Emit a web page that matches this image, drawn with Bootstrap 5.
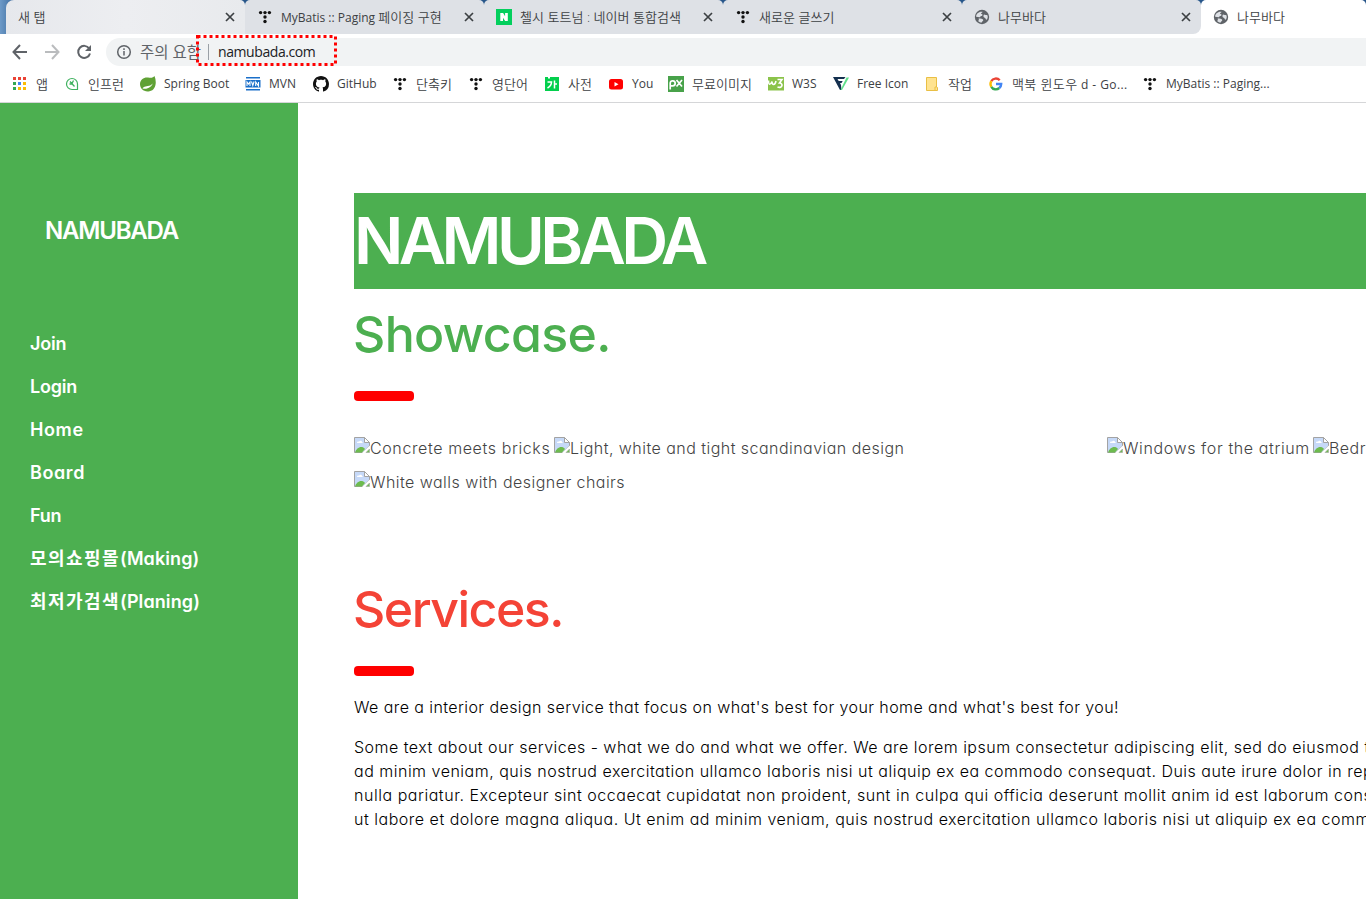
<!DOCTYPE html>
<html lang="ko">
<head>
  <meta charset="UTF-8" />
  <meta name="viewport" content="width=device-width, initial-scale=1.0" />
  <title>나무바다</title>
  <!-- Bootstrap CSS CDN -->
  <link href="https://cdn.jsdelivr.net/npm/bootstrap@5.3.2/dist/css/bootstrap.min.css" rel="stylesheet" />
  <style>
    body {
      height: 899px;
      font-family: "Inter", "Noto Sans CJK KR", sans-serif;
      font-feature-settings: "cv11";
      color: #000;
      background: #fff;
    }
    svg { display: block; flex-shrink: 0; }

    /* browser chrome */
    .browser-top {
      height: 103px;
      font-family: "Open Sans", "Noto Sans CJK KR", sans-serif;
      font-size: 12px;
      line-height: 16px;
      color: #3c4043;
      border-bottom: 1px solid #d5d6d8;
    }
    .tab-strip {
      display: grid;
      grid-template-columns: 245px repeat(4, 239px) 165px;
      height: 34px;
      background: linear-gradient(90deg, #6d9ac8, #27568a 20px);
    }
    .browser-tab {
      position: relative;
      display: flex;
      align-items: center;
      padding: 0 7px 0 12px;
      background: #dee1e6;
      border-radius: 5px 5px 0 0;
    }
    .browser-tab.first-tab {
      margin-left: 6px;
      background: linear-gradient(90deg, #e6e8ec, #edeef1 50%, #e8eaed);
      border-radius: 8px 5px 0 0;
    }
    .browser-tab.last-idle { border-bottom-right-radius: 8px; }
    .browser-tab.active { background: #fff; }
    .under-white { background: linear-gradient(#27568a 8px, #fff 8px); }
    .tab-line::after {
      content: "";
      position: absolute;
      right: -1px;
      top: 8px;
      width: 1px;
      height: 19px;
      background: #80868b;
    }
    .tab-label { margin-left: 8px; flex: 1; white-space: nowrap; }
    .ko { font-weight: 350; font-size: 13px; letter-spacing: .05px; }
    .address-row { height: 36px; padding: 4px 0 4px 12px; }
    .omnibox {
      height: 28px;
      margin-left: 14px;
      padding-left: 10px;
      background: #f1f3f4;
      border-radius: 14px 0 0 14px;
      font-size: 14px;
    }
    .warn-label { width: 60px; font-size: 15.5px; color: #5f6368; white-space: nowrap; }
    .host { margin-left: 9px; color: #202124; letter-spacing: -.42px; }
    .divider { width: 1px; height: 16px; background: #9aa0a6; }
    .highlight-box { position: absolute; left: 196px; top: 35px; }
    .bookmarks {
      display: grid;
      grid-template-columns: 52px 76px 105px 68px 79px 76px 76px 64px 60px 100px 65px 91px 64px 154px auto;
      padding-left: 12px;
      height: 28px;
      align-items: center;
      white-space: nowrap;
    }
    .bookmark { display: flex; align-items: center; gap: 8px; }
    .search-label { letter-spacing: .4px; }

    /* page */
    .side-menu { width: 298px; height: 796px; background: #4caf50; color: #fff; }
    .brand { font-size: 24px; font-weight: 600; line-height: 36px; margin: 109px 0 0 45px; padding-top: 1px; letter-spacing: -1.2px; }
    .side-links { margin-top: 78px; padding-left: 30px; }
    .side-links a {
      display: block;
      height: 43px;
      line-height: 34px;
      font-size: 18px;
      font-weight: 600;
      color: #fff;
      text-decoration: none;
      white-space: nowrap;
      letter-spacing: -.2px;
    }
    .side-links .wide { letter-spacing: .6px; }
    .side-links .hangul { letter-spacing: 1.45px; }
    .side-links .latin { letter-spacing: .1px; }
    .page-main { padding: 90px 0 0 56px; overflow: hidden; white-space: nowrap; }
    .hero-title { height: 96px; line-height: 96px; font-size: 65px; font-weight: 600; letter-spacing: -4.55px; background: #4caf50; color: #fff; margin: 0; }
    .section-title { font-size: 50px; font-weight: 500; line-height: 72px; margin: 9px 0 21px -1px; }
    .green { color: #4caf50; letter-spacing: -.65px; }
    .red { color: #f44336; letter-spacing: -1.5px; }
    .bar { width: 60px; height: 10px; border-radius: 4px; background: #f00; }
    .gallery { margin: 36px 0 68px; }
    .photo-row { display: grid; grid-template-columns: 200px 553px 206px 200px; height: 34px; font-size: 16px; font-weight: 300; color: #444; line-height: 22px; }
    .photo { display: flex; letter-spacing: .61px; }
    .photo.long { letter-spacing: .46px; }
    .copy { font-size: 16px; font-weight: 300; line-height: 24px; margin: 0 0 16px; }
    .intro { margin-top: 19px; letter-spacing: .42px; }
    .line-1 { letter-spacing: .483px; }
    .line-2 { letter-spacing: .5px; }
    .line-3 { letter-spacing: .535px; }
    .line-4 { letter-spacing: .515px; }
  </style>
</head>
<body class="overflow-hidden">

  <!-- icons used more than once -->
  <svg width="0" height="0" class="position-absolute">
    <defs>
      <symbol id="dots" viewBox="0 0 16 16">
        <g fill="#111"><circle cx="3.6" cy="3.6" r="1.7"/><circle cx="8" cy="3.6" r="1.7"/><circle cx="12.4" cy="3.6" r="1.7"/><circle cx="8" cy="8" r="1.7"/><circle cx="8" cy="12.5" r="1.7"/></g>
      </symbol>
      <symbol id="cross" viewBox="0 0 16 16"><path d="M4 4l8 8M12 4l-8 8" stroke="#3c4043" stroke-width="1.7"/></symbol>
      <symbol id="globe" viewBox="0 0 16 16">
        <circle cx="8" cy="8" r="7.2" fill="#5f6368"/>
        <path d="M8.500 2.800c-.2 1.300-1.300 1-1.600 2 1.200.2 2.100.8 1.400 1.800-.8.8-2 .3-2.200 1.600-1.500.2-3-.6-4-.4C2 4.800 5 2.200 8.500 2.800zM10 5.600c1.200.6 2.300.2 3.400.6.7 1.500.3 3.300-.7 4.600-1.200 0-.8-1.500-2-2-1.400-.2-1.700-2.200-.7-3.200zM4.600 9.400c2 .1 4.500 0 4.700 1.500-.1 1.200-1.400 1-1.500 2.600-1.500.1-3-.7-3.700-1.600 1-.6.9-1.600.5-2.500z" fill="#dee1e6"/>
      </symbol>
      <symbol id="broken" viewBox="0 0 16 16">
        <path d="M.5 15.500V.5h10l5 5V9L9 15.500z" fill="#c6d9f8" stroke="#a3a3a3"/>
        <path d="M3 6c0-1.500 1.500-1.700 2-1.200C5.500 3 8 3.500 8 5c1 0 1 1 .5 1z" fill="#fff"/>
        <path d="M1 15.500c1-3.500 4-6 7-5.500 1.300.2 2.200 1 3 2L8 15.500z" fill="#6dbb4e"/>
        <path d="M10.500.5v5h5z" fill="#fff" stroke="#a3a3a3"/>
        <path d="M16 8.500V11l-5 5H8z" fill="#fff"/>
        <path d="M12 15.500h3.500V12z" fill="#6dbb4e" stroke="#a3a3a3" stroke-width=".6"/>
      </symbol>
    </defs>
  </svg>

  <header class="browser-top position-relative">
    <div class="tab-strip">
      <div class="browser-tab first-tab"><span class="tab-label ko ms-0">새 탭</span><svg width="16" height="16"><use href="#cross"/></svg></div>
      <div class="browser-tab tab-line"><svg width="16" height="16"><use href="#dots"/></svg><span class="tab-label">MyBatis :: Paging <span class="ko">페이징 구현</span></span><svg width="16" height="16"><use href="#cross"/></svg></div>
      <div class="browser-tab tab-line"><svg width="16" height="16" viewBox="0 0 16 16"><path d="M0 0h16v16H0z" fill="#03cf5d"/><path d="M4.300 12V4h2.800l2 3.200V4h2.700v8H9.100L7 8.800V12z" fill="#fff"/></svg><span class="tab-label ko">첼시 토트넘 : 네이버 통합검색</span><svg width="16" height="16"><use href="#cross"/></svg></div>
      <div class="browser-tab tab-line"><svg width="16" height="16"><use href="#dots"/></svg><span class="tab-label ko">새로운 글쓰기</span><svg width="16" height="16"><use href="#cross"/></svg></div>
      <div class="under-white"><div class="browser-tab last-idle h-100"><svg width="16" height="16"><use href="#globe"/></svg><span class="tab-label ko">나무바다</span><svg width="16" height="16"><use href="#cross"/></svg></div></div>
      <div class="browser-tab active"><svg width="16" height="16"><use href="#globe"/></svg><span class="tab-label ko">나무바다</span></div>
    </div>

    <div class="address-row d-flex align-items-center">
      <svg width="16" height="16" viewBox="0 0 16 16" fill="none" stroke="#5f6368" stroke-width="2"><path d="M15 8H2M8 1L1.500 8 8 15"/></svg>
      <svg class="ms-3" width="16" height="16" viewBox="0 0 16 16" fill="none" stroke="#babcbe" stroke-width="2"><path d="M1 8h13M8 1l6.500 7L8 15"/></svg>
      <svg class="ms-3" width="16" height="16" viewBox="0 0 16 16"><path d="M13.200 4.500A6 6 0 1 0 14 9.500" fill="none" stroke="#5f6368" stroke-width="2"/><path d="M15 1v6H9z" fill="#5f6368"/></svg>
      <div class="omnibox d-flex align-items-center flex-grow-1">
        <svg width="16" height="16" viewBox="0 0 16 16"><circle cx="8" cy="8" r="6.300" fill="none" stroke="#5f6368" stroke-width="1.500"/><path d="M8 7v4.500M8 4.300v1.600" stroke="#5f6368" stroke-width="1.500"/></svg>
        <span class="warn-label ms-2">주의 요함</span>
        <span class="divider ms-2"></span>
        <span class="host">namubada.com</span>
      </div>
    </div>

    <nav class="bookmarks" aria-label="Bookmarks">
      <span class="bookmark"><svg width="16" height="16" viewBox="0 0 16 16"><path d="M1 1h3v3H1zM6 1h3v3H6zM11 1h3v3h-3z" fill="#ea4335"/><path d="M1 6h3v3H1zM1 11h3v3H1z" fill="#34a853"/><path d="M6 6h3v3H6z" fill="#4285f4"/><path d="M11 6h3v3h-3zM11 11h3v3h-3zM6 11h3v3H6z" fill="#fbbc05"/></svg><span class="ko">앱</span></span>
      <span class="bookmark"><svg width="16" height="16" viewBox="0 0 16 16" fill="none" stroke="#3fb15f"><path d="M13.500 13.500V8A5.500 5.500 0 1 0 8 13.500z" stroke-width="1.200"/><path d="M6 5.500l4.500 5M9.500 4.500l-2 4M5.500 8h3" stroke-width="1.300"/></svg><span class="ko">인프런</span></span>
      <span class="bookmark"><svg width="16" height="16" viewBox="0 0 16 16"><path d="M14.500 0c2.500 6 1.500 14-5 15.300C4 16.500 0 12.500 0 8.300 0 3.500 4 1 8 1.500c3 .4 5 .5 6.500-1.500z" fill="#5fa134"/><path d="M2.500 12.500c5 1 9-1 11-6.500-1 3.500-5 4-8 4.500-1.500.3-2.500 1-3 2z" fill="#fff"/></svg><span>Spring Boot</span></span>
      <span class="bookmark"><svg width="16" height="16" viewBox="0 0 16 16"><path d="M1 1h14v1.500H1zM1 13h14v1.500H1z" fill="#1a6fc9"/><path d="M.5 4h15v7.500H.5z" fill="#1a6fc9"/><path d="M2 10V6l1.500 2L5 6v4M6.500 5.500l1.300 4 1.300-4M10.700 10V6l2.800 4V6" fill="none" stroke="#fff" stroke-width="1.100"/></svg><span>MVN</span></span>
      <span class="bookmark"><svg width="16" height="16" viewBox="0 0 16 16"><path d="M8 0C3.580 0 0 3.580 0 8c0 3.540 2.290 6.530 5.470 7.590.4.070.55-.17.55-.38 0-.19-.01-.82-.01-1.490-2.010.37-2.530-.49-2.690-.94-.09-.23-.48-.94-.82-1.130-.28-.15-.68-.52-.01-.53.63-.01 1.080.58 1.230.82.72 1.210 1.870.87 2.330.66.07-.52.28-.87.51-1.070-1.780-.2-3.640-.89-3.640-3.950 0-.87.31-1.590.82-2.150-.08-.2-.36-1.020.08-2.120 0 0 .67-.21 2.200.82.64-.18 1.320-.27 2-.27s1.360.09 2 .27c1.530-1.040 2.200-.82 2.200-.82.44 1.100.16 1.920.08 2.120.51.56.82 1.270.82 2.150 0 3.070-1.870 3.750-3.650 3.950.29.25.54.73.54 1.480 0 1.070-.01 1.930-.01 2.200 0 .21.15.46.55.38A8.010 8.010 0 0 0 16 8c0-4.420-3.580-8-8-8z" fill="#111"/></svg><span>GitHub</span></span>
      <span class="bookmark"><svg width="16" height="16"><use href="#dots"/></svg><span class="ko">단축키</span></span>
      <span class="bookmark"><svg width="16" height="16"><use href="#dots"/></svg><span class="ko">영단어</span></span>
      <span class="bookmark"><svg width="16" height="16" viewBox="0 0 16 16"><path d="M1 1h3v1.500h2V1h9v14H1z" fill="#03cf4d"/><path d="M3.500 6h4c0 3-1.500 4.500-4 6M10.500 4.500v8M10.500 8h2.500" fill="none" stroke="#fff" stroke-width="1.500"/></svg><span class="ko">사전</span></span>
      <span class="bookmark"><svg width="16" height="16" viewBox="0 0 16 16"><rect x="1" y="3" width="14" height="10.500" rx="2.500" fill="#f00"/><path d="M6.500 6v4.500l4-2.250z" fill="#fff"/></svg><span>You</span></span>
      <span class="bookmark"><svg width="16" height="16" viewBox="0 0 16 16"><path d="M0 0h16v16H0z" fill="#48a24a"/><path d="M2.200 13.500V7a2.500 2.500 0 1 1 2.500 2.800H3M8.500 4l5.500 6.500M14 4l-5.500 6.500" fill="none" stroke="#fff" stroke-width="1.700"/></svg><span class="ko">무료이미지</span></span>
      <span class="bookmark"><svg width="16" height="16" viewBox="0 0 16 16"><path d="M0 1h16v13.500H0z" fill="#8bc34a"/><path d="M.5 4.500c0 5 2 4.500 3.500 1 0 4 3 4 4-.5M9.500 3.500h4.500L11.500 7c4 0 3 6-2 4" fill="none" stroke="#fff" stroke-width="1.600"/></svg><span>W3S</span></span>
      <span class="bookmark"><svg width="16" height="16" viewBox="0 0 16 16"><path d="M0 1h12.500l-1.500 2H4.500l1.200 2h4l-1.200 2H7l1 2 .5 5H7z" fill="#14304f"/><path d="M13.500 1.500H16L9 14H7.500z" fill="#5fe08a"/></svg><span>Free Icon</span></span>
      <span class="bookmark"><svg width="16" height="16" viewBox="0 0 16 16"><path d="M2.500 1.500h10v9.500l1 .5v3h-11z" fill="#ffe38f" stroke="#e9bf45"/><path d="M11 14v-3h1.500" fill="none" stroke="#e9bf45"/></svg><span class="ko">작업</span></span>
      <span class="bookmark"><svg width="16" height="16" viewBox="0 0 16 16" fill="none" stroke-width="2.400"><path d="M3.300 5.200A5.200 5.200 0 0 1 11.700 4.300" stroke="#ea4335"/><path d="M3.300 5.200a5.500 5.500 0 0 0 0 5.600" stroke="#fbbc05"/><path d="M3.300 10.800A5.200 5.200 0 0 0 11.300 12" stroke="#34a853"/><path d="M8 8h5.200c0 1.800-.7 3-1.900 4" stroke="#4285f4"/></svg><span class="search-label"><span class="ko search-label">맥북 윈도우</span> d - Go...</span></span>
      <span class="bookmark"><svg width="16" height="16"><use href="#dots"/></svg><span>MyBatis :: Paging...</span></span>
    </nav>

    <!-- dotted marker round the host name -->
    <svg class="highlight-box" width="141" height="31"><rect x="1.500" y="1.500" width="138" height="28" fill="none" stroke="#f00" stroke-width="3" stroke-dasharray="3 3"/></svg>
  </header>

  <div class="d-flex">
    <aside class="side-menu flex-shrink-0 overflow-hidden">
      <div class="brand">NAMUBADA</div>
      <nav class="side-links">
        <a href="#">Join</a>
        <a href="#">Login</a>
        <a href="#" class="wide">Home</a>
        <a href="#" class="wide">Board</a>
        <a href="#">Fun</a>
        <a href="#"><span class="hangul">모의쇼핑몰</span><span class="latin">(Making)</span></a>
        <a href="#"><span class="hangul">최저가검색</span><span class="latin">(Planing)</span></a>
      </nav>
    </aside>

    <main class="page-main flex-grow-1">
      <h1 class="hero-title">NAMUBADA</h1>

      <!-- Showcase -->
      <h2 class="section-title green">Showcase.</h2>
      <div class="bar"></div>
      <div class="gallery">
        <div class="photo-row">
          <span class="photo"><svg width="16" height="16"><use href="#broken"/></svg>Concrete meets bricks</span>
          <span class="photo long"><svg width="16" height="16"><use href="#broken"/></svg>Light, white and tight scandinavian design</span>
          <span class="photo"><svg width="16" height="16"><use href="#broken"/></svg>Windows for the atrium</span>
          <span class="photo long"><svg width="16" height="16"><use href="#broken"/></svg>Bedr</span>
        </div>
        <div class="photo-row">
          <span class="photo long"><svg width="16" height="16"><use href="#broken"/></svg>White walls with designer chairs</span>
        </div>
      </div>

      <!-- Services -->
      <h2 class="section-title red">Services.</h2>
      <div class="bar"></div>
      <p class="copy intro">We are a interior design service that focus on what's best for your home and what's best for you!</p>
      <p class="copy">
        <span class="line-1">Some text about our services - what we do and what we offer. We are lorem ipsum consectetur adipiscing elit, sed do eiusmod t</span><br>
        <span class="line-2">ad minim veniam, quis nostrud exercitation ullamco laboris nisi ut aliquip ex ea commodo consequat. Duis aute irure dolor in rep</span><br>
        <span class="line-3">nulla pariatur. Excepteur sint occaecat cupidatat non proident, sunt in culpa qui officia deserunt mollit anim id est laborum cons</span><br>
        <span class="line-4">ut labore et dolore magna aliqua. Ut enim ad minim veniam, quis nostrud exercitation ullamco laboris nisi ut aliquip ex ea comm</span>
      </p>
    </main>
  </div>

  <!-- Bootstrap JS CDN -->
  <script src="https://cdn.jsdelivr.net/npm/bootstrap@5.3.2/dist/js/bootstrap.bundle.min.js"></script>
</body>
</html>
